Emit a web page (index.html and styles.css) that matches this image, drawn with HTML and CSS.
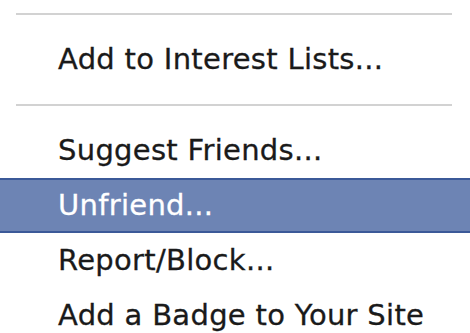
FILE: index.html
```html
<!DOCTYPE html>
<html>
<head>
<meta charset="utf-8">
<link rel="stylesheet" href="styles.css">
</head>
<body>
<div class="menu">
  <div class="sep"></div>
  <div class="item">Add to Interest Lists...</div>
  <div class="sep"></div>
  <div class="item">Suggest Friends...</div>
  <div class="item active">Unfriend...</div>
  <div class="item">Report/Block...</div>
  <div class="item">Add a Badge to Your Site</div>
</div>
</body>
</html>
```
FILE: styles.css
```css
html, body {
  margin: 0;
  padding: 0;
  background: #ffffff;
}
body {
  width: 470px;
  height: 333px;
  overflow: hidden;
  font-family: "DejaVu Sans", "Liberation Sans", sans-serif;
}
.menu {
  display: flex;
  flex-direction: column;
}
.sep {
  height: 2px;
  background: #d2d2d2;
  margin: 17px 18px 17px 16px;
}
.sep:first-child {
  margin-top: 13px;
}
.item {
  box-sizing: border-box;
  height: 55px;
  line-height: 55px;
  padding-left: 58px;
  font-size: 29px;
  letter-spacing: 0.3px;
  color: #1a1a1a;
  -webkit-text-stroke: 0.3px #1a1a1a;
  white-space: nowrap;
}
.item.active {
  background: #6d84b4;
  border-top: 2px solid #3b5998;
  border-bottom: 2px solid #3b5998;
  line-height: 51px;
  color: #ffffff;
  -webkit-text-stroke: 0.3px #ffffff;
}
```
